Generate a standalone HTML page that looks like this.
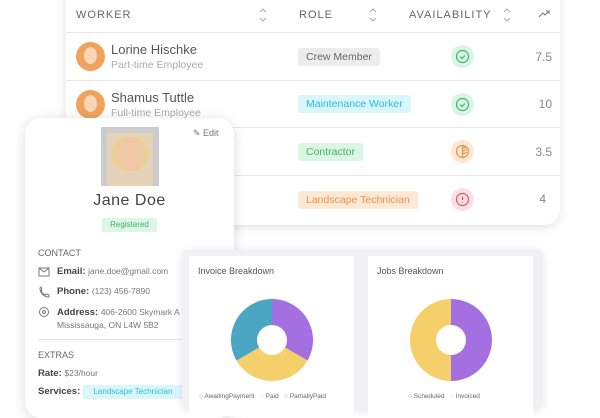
<!DOCTYPE html><html><head><style>
*{margin:0;padding:0;box-sizing:border-box}
body{width:600px;height:403px;overflow:hidden;background:#fff;font-family:"Liberation Sans",sans-serif;position:relative;color:#555}
.tbl{position:absolute;left:66px;top:-20px;width:494px;height:245px;background:#fff;border-radius:0 0 16px 16px;box-shadow:0 2px 10px rgba(0,0,0,.12)}
.hd{position:absolute;top:9px;font-size:11px;letter-spacing:1px;color:#666}
.line{position:absolute;left:66px;width:494px;height:1px;background:#e6e6e6}
.av{position:absolute;left:76px;width:29px;height:29px;border-radius:50%;background:#f0a35a;overflow:hidden}
.av:after{content:"";position:absolute;left:8px;top:5px;width:13px;height:17px;border-radius:50%;background:#f4d6b8}
.nm{position:absolute;left:111px;font-size:13px;color:#555}
.sb{position:absolute;left:111px;font-size:10.5px;color:#aaa}
.tag{position:absolute;left:298px;height:18px;line-height:18px;padding:0 8px;font-size:10.5px;border-radius:3px}
.ic{position:absolute;left:451px;width:23px;height:23px;border-radius:50%}
.num{position:absolute;right:48px;font-size:12px;color:#888}
.card{position:absolute;left:25px;top:118px;width:209px;height:300px;background:#fff;border-radius:16px;box-shadow:0 2px 12px rgba(0,0,0,.15)}
.lbl{position:absolute;left:13px;font-size:9px;color:#666}
.row{position:absolute;left:32px;font-size:9.5px;color:#555}
.row b{color:#444}
.row span{color:#777;font-size:8.5px}
.charts{position:absolute;left:182px;top:250px;width:361px;height:160px;background:#f1f1f3;border-radius:6px;box-shadow:0 1px 8px rgba(0,0,0,.1)}
.cc{position:absolute;top:6px;width:165px;height:160px;background:#fff}
.ct{position:absolute;left:9px;top:10px;font-size:9px;color:#555}
.lg{position:absolute;top:137px;font-size:6.5px;color:#666;white-space:nowrap}
</style></head><body>
<div class="tbl"></div>
<div class="hd" style="left:76px">WORKER</div>
<div class="hd" style="left:299px">ROLE</div>
<div class="hd" style="left:409px">AVAILABILITY</div>
<svg style="position:absolute;left:258px;top:7px" width="10" height="16"><path d="M2 5l3-3 3 3M2 11l3 3 3-3" stroke="#aaa" fill="none"/></svg>
<svg style="position:absolute;left:368px;top:7px" width="10" height="16"><path d="M2 5l3-3 3 3M2 11l3 3 3-3" stroke="#aaa" fill="none"/></svg>
<svg style="position:absolute;left:502px;top:7px" width="10" height="16"><path d="M2 5l3-3 3 3M2 11l3 3 3-3" stroke="#aaa" fill="none"/></svg>
<svg style="position:absolute;left:538px;top:9px" width="12" height="10"><path d="M1 8l4-4 2 2 4-4M8 2h3v3" stroke="#777" fill="none"/></svg>
<div class="line" style="top:32px"></div>
<div class="line" style="top:80px"></div>
<div class="line" style="top:127px"></div>
<div class="line" style="top:175px"></div>
<div class="av" style="top:42px"></div>
<div class="av" style="top:90px"></div>
<div class="nm" style="top:42px">Lorine Hischke</div><div class="sb" style="top:59px">Part-time Employee</div>
<div class="nm" style="top:90px">Shamus Tuttle</div><div class="sb" style="top:107px">Full-time Employee</div>
<div class="tag" style="top:48px;background:#ececec;color:#666">Crew Member</div>
<div class="tag" style="top:95px;background:#d9f6fb;color:#2bbcd8">Maintenance Worker</div>
<div class="tag" style="top:143px;background:#dcf6e5;color:#3cb46a">Contractor</div>
<div class="tag" style="top:191px;background:#fde8d6;color:#e8924a">Landscape Technician</div>
<div class="ic" style="top:45px;background:#daf5e3"><svg width="23" height="23"><circle cx="11.5" cy="11.5" r="6" stroke="#3cb46a" fill="none" stroke-width="1.2"/><path d="M9 11.5l2 2 3-3" stroke="#3cb46a" fill="none" stroke-width="1.2"/></svg></div>
<div class="ic" style="top:93px;background:#daf5e3"><svg width="23" height="23"><circle cx="11.5" cy="11.5" r="6" stroke="#3cb46a" fill="none" stroke-width="1.2"/><path d="M9 11.5l2 2 3-3" stroke="#3cb46a" fill="none" stroke-width="1.2"/></svg></div>
<div class="ic" style="top:140px;background:#fde6d2"><svg width="23" height="23"><circle cx="11.5" cy="11.5" r="6" stroke="#e8924a" fill="none" stroke-width="1.2"/><path d="M11.5 5.5v12M12 8l3 -1M12 11l4-2M12 14l4-2" stroke="#e8924a" stroke-width="1.2"/></svg></div>
<div class="ic" style="top:188px;background:#fbe0e3"><svg width="23" height="23"><circle cx="11.5" cy="11.5" r="6" stroke="#d85a6a" fill="none" stroke-width="1.2"/><path d="M11.5 8.5v3.5M11.5 14v.8" stroke="#d85a6a" stroke-width="1.3"/></svg></div>
<div class="num" style="top:50px;right:48px">7.5</div>
<div class="num" style="top:97px">10</div>
<div class="num" style="top:145px">3.5</div>
<div class="num" style="top:192px;right:54px">4</div>

<div class="card">
<div style="position:absolute;left:76px;top:9px;width:58px;height:59px;background:#ccc"><div style="position:absolute;left:6px;top:6px;width:46px;height:53px;background:#e6d2b8"></div><div style="position:absolute;left:15px;top:10px;width:28px;height:34px;border-radius:50%;background:#f0c8a6;box-shadow:-4px 0 0 #e9d38a,4px 0 0 #e9d38a"></div></div>
<div style="position:absolute;left:168px;top:10px;font-size:9px;color:#777">✎ Edit</div>
<div style="position:absolute;left:0;width:209px;top:74px;text-align:center;font-size:16px;color:#444;letter-spacing:.5px">Jane Doe</div>
<div style="position:absolute;left:77px;top:100px;width:55px;height:14px;background:#ddf6e5;color:#3cb46a;font-size:8px;line-height:14px;text-align:center">Registered</div>
<div class="lbl" style="top:130px">CONTACT</div>
<svg style="position:absolute;left:13px;top:148px" width="12" height="60"><rect x="1" y="2" width="10" height="8" fill="none" stroke="#777"/><path d="M1 2l5 4 5-4" stroke="#777" fill="none"/><path d="M2 22c0 5 4 9 9 9l0-2-3-1-1 1c-2-1-3-2-4-4l1-1-1-3z" stroke="#777" fill="none"/><circle cx="6" cy="46" r="4.5" stroke="#777" fill="none"/><circle cx="6" cy="46" r="1.5" stroke="#777" fill="none"/></svg>
<div class="row" style="top:148px"><b>Email:</b> <span>jane.doe@gmail.com</span></div>
<div class="row" style="top:168px"><b>Phone:</b> <span>(123) 456-7890</span></div>
<div class="row" style="top:188px;line-height:13px"><b>Address:</b> <span>406-2600 Skymark A</span><br><span>Mississauga, ON L4W 5B2</span></div>
<div style="position:absolute;left:13px;right:0;top:221px;height:1px;background:#e3e3e3"></div>
<div class="lbl" style="top:232px">EXTRAS</div>
<div class="lbl" style="top:250px;font-size:9.5px"><b style="color:#444">Rate:</b> <span style="color:#777;font-size:8.5px">$23/hour</span></div>
<div class="lbl" style="top:268px;font-size:9.5px"><b style="color:#444">Services:</b></div>
<div style="position:absolute;left:58px;top:267px;width:100px;height:14px;background:#d9f6fb;color:#2bbcd8;font-size:8px;line-height:14px;text-align:center">Landscape Technician</div>
</div>

<div class="charts">
<div class="cc" style="left:7px"><div class="ct">Invoice Breakdown</div>
<svg style="position:absolute;left:41px;top:42px" width="84" height="84" viewBox="-42 -42 84 84">
<path d="M0 0L0 -41A41 41 0 0 1 35.5 20.5Z" fill="#a46fe0"/>
<path d="M0 0L35.5 20.5A41 41 0 0 1 -35.5 20.5Z" fill="#f4cf6a"/>
<path d="M0 0L-35.5 20.5A41 41 0 0 1 0 -41Z" fill="#4aa6c2"/>
<circle r="15" fill="#fff"/></svg>
<div class="lg" style="left:10px"><span style="color:#a46fe0">○</span> AwaitingPayment &nbsp;&nbsp;<span style="color:#f4cf6a">○</span> Paid &nbsp;&nbsp;<span style="color:#4aa6c2">○</span> PartiallyPaid</div></div>
<div class="cc" style="left:186px"><div class="ct">Jobs Breakdown</div>
<svg style="position:absolute;left:41px;top:42px" width="84" height="84" viewBox="-42 -42 84 84">
<path d="M0 0L0 -41A41 41 0 0 1 0 41Z" fill="#a46fe0"/>
<path d="M0 0L0 41A41 41 0 0 1 0 -41Z" fill="#f4cf6a"/>
<circle r="15" fill="#fff"/></svg>
<div class="lg" style="left:40px"><span style="color:#a46fe0">○</span> Scheduled &nbsp;&nbsp;<span style="color:#f4cf6a">○</span> Invoiced</div></div>
</div>
</body></html>
